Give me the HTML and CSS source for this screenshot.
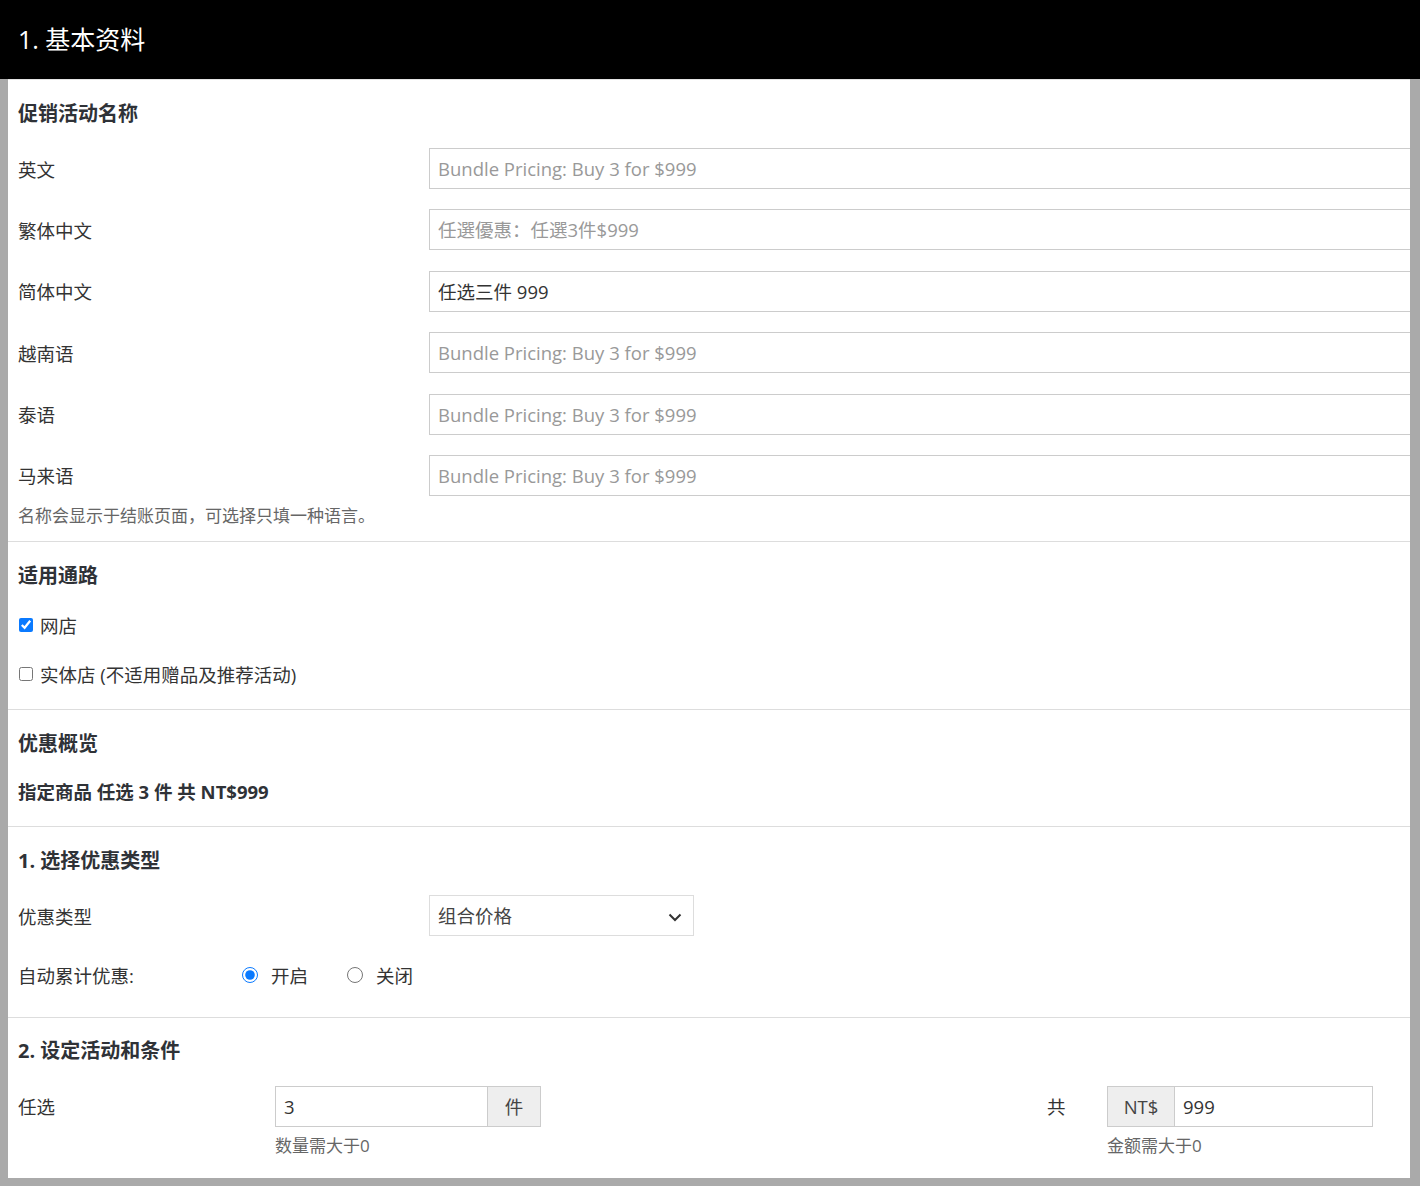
FILE: index.html
```html
<!DOCTYPE html>
<html lang="zh-CN">
<head>
  <meta charset="UTF-8">
  <meta name="viewport" content="width=device-width, initial-scale=1.0">
  <title>基本资料</title>
  <link rel="stylesheet" href="styles.css">
</head>
<body>

  <header class="page-header">1. 基本资料</header>

  <main class="wrap">
    <div class="panel">

      <section class="section section-names">
        <h2 class="title">促销活动名称</h2>
        <div class="name-row">
          <label class="name-label">英文</label>
          <input class="field" type="text" placeholder="Bundle Pricing: Buy 3 for $999">
        </div>
        <div class="name-row">
          <label class="name-label">繁体中文</label>
          <input class="field field-tc" type="text" placeholder="任選優惠：任選3件$999">
        </div>
        <div class="name-row">
          <label class="name-label">简体中文</label>
          <input class="field" type="text" value="任选三件 999">
        </div>
        <div class="name-row">
          <label class="name-label">越南语</label>
          <input class="field" type="text" placeholder="Bundle Pricing: Buy 3 for $999">
        </div>
        <div class="name-row">
          <label class="name-label">泰语</label>
          <input class="field" type="text" placeholder="Bundle Pricing: Buy 3 for $999">
        </div>
        <div class="name-row">
          <label class="name-label">马来语</label>
          <input class="field" type="text" placeholder="Bundle Pricing: Buy 3 for $999">
        </div>
        <p class="hint hint-tc">名称会显示于结账页面，可选择只填一种语言。</p>
      </section>

      <section class="section section-channels">
        <h2 class="title">适用通路</h2>
        <label class="check-row first"><input type="checkbox" checked> 网店</label>
        <label class="check-row"><input type="checkbox"> 实体店 (不适用赠品及推荐活动)</label>
      </section>

      <section class="section section-summary">
        <h2 class="title">优惠概览</h2>
        <p class="summary">指定商品 任选 3 件 共 NT$999</p>
      </section>

      <section class="section section-type">
        <h2 class="title">1. 选择优惠类型</h2>
        <div class="type-row">
          <label class="name-label">优惠类型</label>
          <div class="select-box">
            <select class="select">
              <option>组合价格</option>
            </select>
            <svg class="chevron" width="14" height="9" viewBox="0 0 14 9">
              <path d="M1.5 1.5 L7 7 L12.5 1.5" fill="none" stroke="#333" stroke-width="2"/>
            </svg>
          </div>
        </div>
        <div class="radio-row">
          <span class="radio-label">自动累计优惠:</span>
          <label class="radio-opt"><input type="radio" name="stack" checked> 开启</label>
          <label class="radio-opt"><input type="radio" name="stack"> 关闭</label>
        </div>
      </section>

      <section class="section section-rule">
        <h2 class="title">2. 设定活动和条件</h2>
        <div class="rule-row">
          <span class="rule-label">任选</span>
          <div class="rule-cell">
            <div class="group">
              <input class="group-input qty" type="text" value="3">
              <span class="addon addon-right">件</span>
            </div>
            <p class="hint small">数量需大于0</p>
          </div>
          <span class="rule-label total">共</span>
          <div class="rule-cell">
            <div class="group">
              <span class="addon addon-left">NT$</span>
              <input class="group-input amount" type="text" value="999">
            </div>
            <p class="hint small">金额需大于0</p>
          </div>
        </div>
      </section>

    </div>
  </main>

</body>
</html>
```

FILE: styles.css
```css
html, body {
  overflow: hidden;
}

body {
  margin: 0;
  background-color: #aaa;
  font-family: "Open Sans", "Noto Sans CJK SC", sans-serif;
  color: #333;
}

.page-header {
  height: 79px;
  background-color: #000;
  color: #fff;
  font-size: 25px;
  line-height: 79px;
  padding-left: 18px;
}

.wrap {
  padding: 0 10px 8px 8px;
}

.panel {
  background-color: #fff;
  overflow: hidden;
}

.section {
  border-top: 1px solid #ddd;
  padding: 20px 10px;
}

.section-names {
  border-top-color: #e4e4e4;
}

.title {
  margin: 0;
  font-size: 20px;
  line-height: 28px;
  font-weight: bold;
  color: #2f3237;
}

/* names */
.section-names {
  padding-bottom: 13.5px;
}

.name-row {
  display: flex;
  align-items: center;
  height: 41px;
  margin-top: 20.4px;
}

.section-names .name-row:first-of-type {
  margin-top: 20px;
}

.name-label {
  width: 411px;
  flex-shrink: 0;
  font-size: 18.5px;
}

.field {
  flex: 1;
  margin-right: -40px;
  height: 41px;
  box-sizing: border-box;
  border: 1px solid #ccc;
  padding: 0 8px;
  font-family: inherit;
  font-size: 18.5px;
  color: #333;
  outline: none;
}

.field-tc,
.hint-tc {
  font-family: "Open Sans", "Noto Sans CJK TC", sans-serif;
}

.field::placeholder,
.group-input::placeholder {
  color: #999;
}

.hint {
  margin: 8px 0 0;
  font-size: 17px;
  line-height: 24px;
  color: #666;
}

/* channels */
.section-channels {
  padding-bottom: 22px;
}

.check-row {
  display: flex;
  align-items: center;
  height: 26px;
  margin-top: 23px;
  font-size: 18.5px;
}

.check-row.first {
  margin-top: 22px;
}

.check-row input {
  width: 14px;
  height: 14px;
  margin: 0 7px 0 1px;
  accent-color: #0a7aff;
}

/* summary */
.section-summary {
  padding-bottom: 21px;
}

.summary {
  margin: 21px 0 0;
  font-size: 18.5px;
  line-height: 26px;
  font-weight: bold;
  color: #2f3237;
}

/* type */
.section-type {
  padding-bottom: 21px;
}

.type-row {
  display: flex;
  align-items: center;
  margin-top: 20px;
}

.select-box {
  position: relative;
  width: 265px;
  height: 41px;
}

.select {
  appearance: none;
  -webkit-appearance: none;
  width: 100%;
  height: 100%;
  border: 1px solid #ddd;
  border-radius: 0;
  background-color: #fff;
  padding: 0 8px;
  font-family: inherit;
  font-size: 18.5px;
  color: #444;
}

.chevron {
  position: absolute;
  right: 12px;
  top: 18px;
}

.radio-row {
  display: flex;
  align-items: center;
  height: 41px;
  margin-top: 18.5px;
  font-size: 18.5px;
}

.radio-label {
  width: 222px;
}

.radio-opt {
  display: flex;
  align-items: center;
  margin-right: 37px;
}

.radio-opt input {
  width: 16px;
  height: 16px;
  margin: 0 13px 0 2px;
  accent-color: #0a7aff;
}

/* rule */
.section-rule {
  padding-top: 19px;
}

.rule-row {
  display: flex;
  align-items: flex-start;
  margin-top: 21px;
}

.rule-label {
  width: 257px;
  line-height: 41px;
  font-size: 18.5px;
}

.rule-label.total {
  width: 60px;
  margin-left: 506px;
}

.rule-cell {
  width: 266px;
}

.group {
  display: flex;
  height: 41px;
}

.group-input {
  flex: 1;
  min-width: 0;
  box-sizing: border-box;
  border: 1px solid #ccc;
  padding: 0 8px;
  font-family: inherit;
  font-size: 18.5px;
  color: #333;
  outline: none;
}

.addon {
  display: flex;
  align-items: center;
  justify-content: center;
  box-sizing: border-box;
  background-color: #eee;
  border: 1px solid #ccc;
  font-size: 18.5px;
  color: #444;
}

.addon-right {
  width: 53px;
  border-left: none;
}

.addon-left {
  width: 67px;
  border-right: none;
}

.hint.small {
  margin-top: 7px;
}
```
